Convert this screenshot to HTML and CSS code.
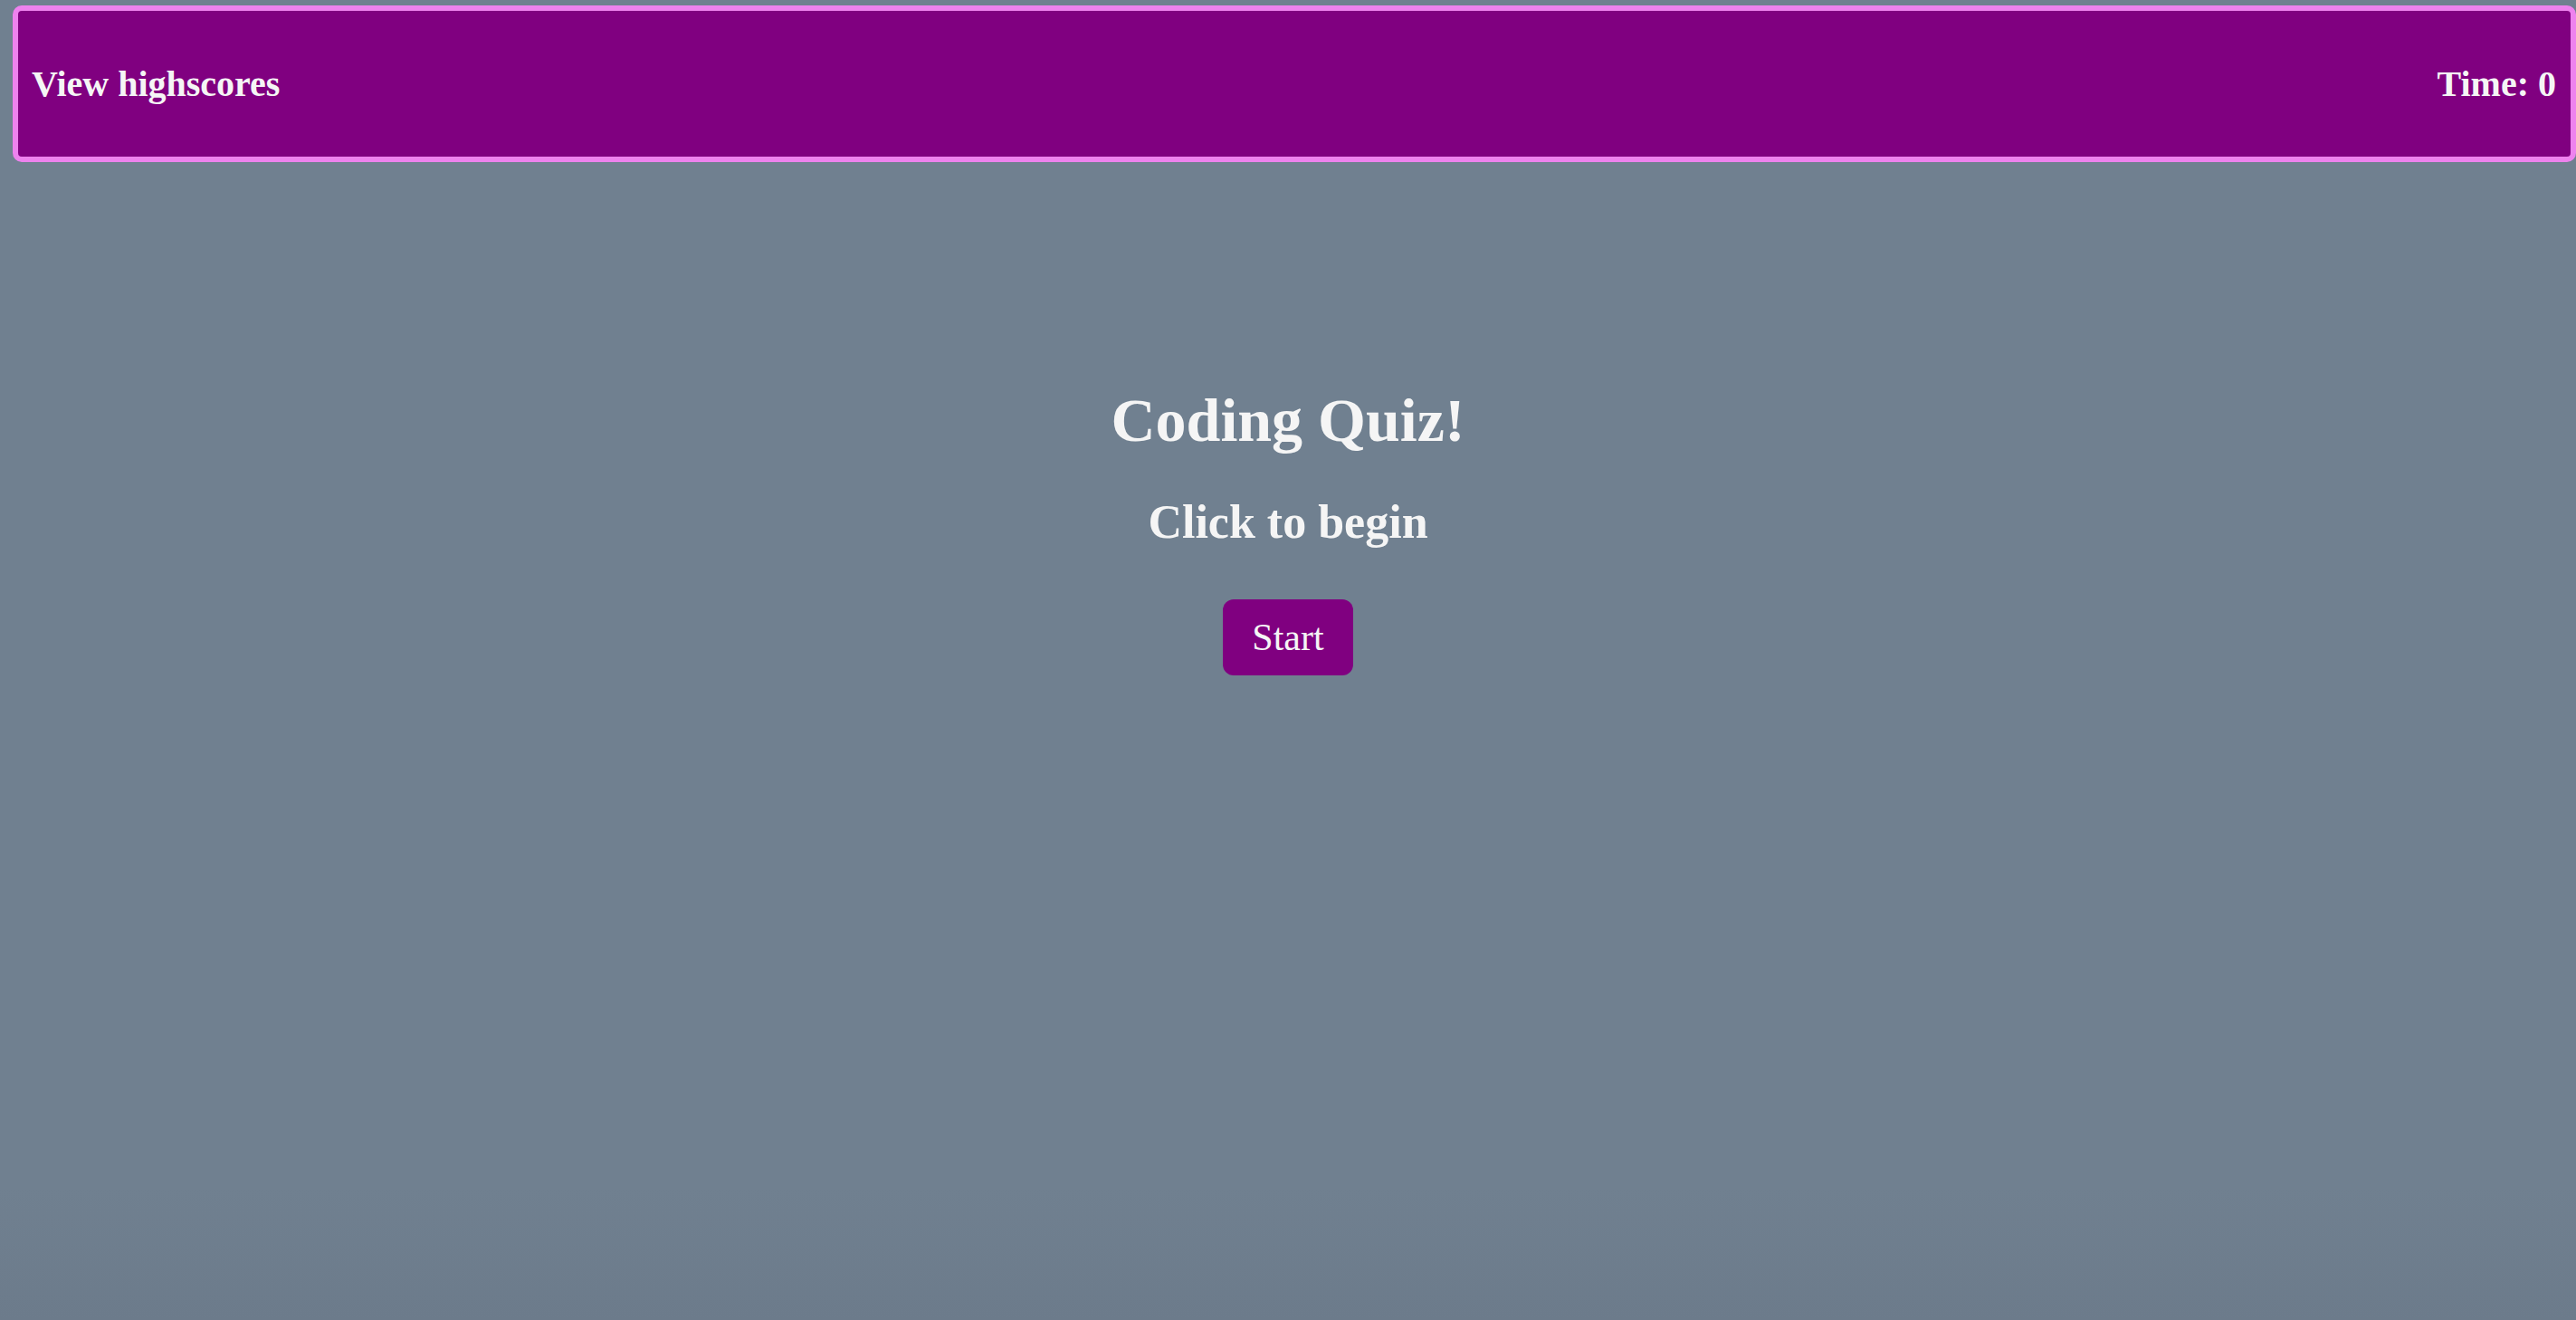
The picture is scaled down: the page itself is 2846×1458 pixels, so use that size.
FILE: index.html
```html
<!DOCTYPE html>
<html lang="en">
<head>
<meta charset="utf-8">
<title>Coding Quiz</title>
<link rel="stylesheet" href="styles.css">
</head>
<body>
<header class="topbar">
  <a class="highscores">View highscores</a>
  <span class="timer">Time: 0</span>
</header>
<main class="intro">
  <h1 class="title">Coding Quiz!</h1>
  <h2 class="subtitle">Click to begin</h2>
  <button class="start-btn">Start</button>
</main>
</body>
</html>
```
FILE: styles.css
```css
html, body {
  margin: 0;
  padding: 0;
}
html {
  overflow: hidden;
}
body {
  height: 100vh;
  background: linear-gradient(180deg, #708090 0%, #708090 90%, #6c7b8b 100%);
  font-family: "Liberation Serif", "Times New Roman", serif;
  color: #f5f5f5;
  padding-top: 6px;
  padding-left: 14px;
  box-sizing: border-box;
}
.topbar {
  box-sizing: border-box;
  height: 173px;
  border: 6px solid #ee82ee;
  border-radius: 10px;
  background: #800080;
  display: flex;
  align-items: center;
  justify-content: space-between;
  padding: 0 16px 0 15px;
  font-weight: bold;
  font-size: 40px;
}
.highscores {
  color: #f5f5f5;
  cursor: pointer;
}
.intro {
  display: flex;
  flex-direction: column;
  align-items: center;
  padding-top: 251px;
  margin-left: -14px;
}
.title {
  margin: 0;
  font-size: 68px;
  line-height: 68px;
  font-weight: bold;
}
.subtitle {
  margin: 53px 0 0;
  font-size: 52px;
  line-height: 52px;
  font-weight: bold;
}
.start-btn {
  margin-top: 59px;
  width: 144px;
  height: 84px;
  border: none;
  border-radius: 12px;
  background: #800080;
  color: #f5f5f5;
  font-family: "Liberation Serif", "Times New Roman", serif;
  font-size: 42px;
  line-height: 42px;
  padding: 0;
  cursor: pointer;
}
```
